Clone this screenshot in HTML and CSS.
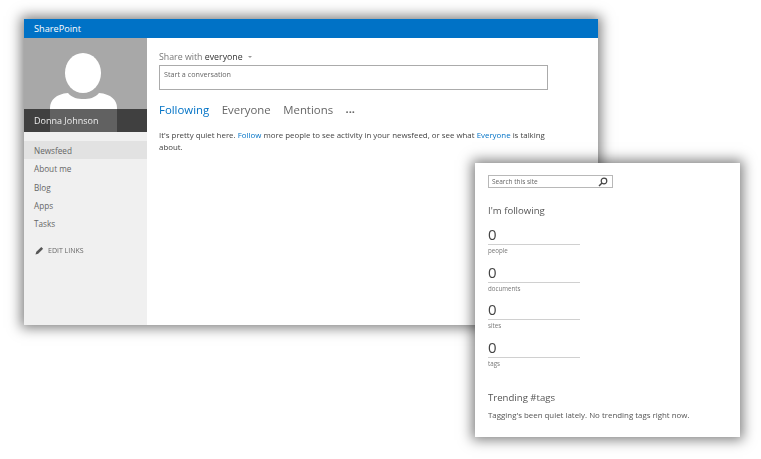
FILE: index.html
```html
<!DOCTYPE html>
<html>
<head>
    <title>SharePoint Newsfeed</title>
    <link rel="stylesheet" href="styles.css">
</head>
<body>
    <div class="window feed-window">
        <div class="topbar">SharePoint</div>
        <div class="feed-body">
            <div class="sidebar">
                <div class="photo">
                    <svg class="avatar" width="123" height="94" viewBox="0 0 123 94">
                        <path d="M26 94 V70 C26 62 32 56 44 55 C48 60 54 61 59.500 61 C65 61 71 60 75 55 C87 56 93 62 93 70 V94 Z" fill="#fff"/>
                        <ellipse cx="59" cy="35" rx="18" ry="20" fill="#fff"/>
                    </svg>
                    <div class="photo-name">Donna Johnson</div>
                </div>
                <ul class="nav">
                    <li class="nav-item active">Newsfeed</li>
                    <li class="nav-item">About me</li>
                    <li class="nav-item">Blog</li>
                    <li class="nav-item">Apps</li>
                    <li class="nav-item">Tasks</li>
                </ul>
                <div class="edit-links">
                    <svg width="9" height="9" viewBox="0 0 10 10">
                        <path d="M0.500 9.500 L1.500 6.500 L7 1 L9 3 L3.500 8.500 Z" fill="#555"/>
                    </svg>
                    EDIT LINKS
                </div>
            </div>
            <div class="main">
                <div class="share">Share with <span class="share-who">everyone</span> <span class="caret"></span></div>
                <div class="post-box">Start a conversation</div>
                <div class="tabs">
                    <span class="tab current">Following</span>
                    <span class="tab">Everyone</span>
                    <span class="tab">Mentions</span>
                    <span class="tab-more">...</span>
                </div>
                <p class="quiet">It's pretty quiet here. <span class="link">Follow</span> more people to see activity in your newsfeed, or see what <span class="link">Everyone</span> is talking about.</p>
            </div>
        </div>
    </div>

    <div class="window side-window">
        <div class="search">
            <span>Search this site</span>
            <svg width="10" height="10" viewBox="0 0 10 10">
                <circle cx="6" cy="4" r="2.800" fill="none" stroke="#444" stroke-width="1.200"/>
                <path d="M4 6 L1 9" stroke="#444" stroke-width="1.500"/>
            </svg>
        </div>
        <h2 class="side-title">I'm following</h2>
        <div class="stat"><div class="stat-num">0</div><div class="stat-label">people</div></div>
        <div class="stat"><div class="stat-num">0</div><div class="stat-label">documents</div></div>
        <div class="stat"><div class="stat-num">0</div><div class="stat-label">sites</div></div>
        <div class="stat"><div class="stat-num">0</div><div class="stat-label">tags</div></div>
        <h2 class="side-title trending">Trending #tags</h2>
        <p class="trending-text">Tagging's been quiet lately. No trending tags right now.</p>
    </div>
</body>
</html>
```

FILE: styles.css
```css
body { margin: 0; width: 761px; height: 459px; overflow: hidden; background: #fff; position: relative; font-family: "Open Sans", "Liberation Sans", sans-serif; color: #444; }
.window { position: absolute; background: #fff; box-shadow: 0 0 12px 3px rgba(0,0,0,.5); filter: blur(.3px); }

.feed-window { left: 24px; top: 19px; width: 574px; height: 306px; display: flex; flex-direction: column; }
.topbar { height: 19px; line-height: 20px; padding-left: 10px; background: #0072c6; color: #fff; font-size: 9.200px; }
.feed-body { flex: 1; display: flex; }

.sidebar { width: 123px; background: #f0f0f0; }
.photo { position: relative; height: 94px; background: #a8a8a8; }
.avatar { display: block; }
.photo-name { position: absolute; left: 0; right: 0; bottom: 0; height: 23px; line-height: 23px; padding-left: 10px; background: rgba(0,0,0,.62); color: #eee; font-size: 9px; }
.nav { list-style: none; margin: 9px 0 0; padding: 0; }
.nav-item { height: 18.250px; line-height: 20px; padding-left: 10px; font-size: 8.200px; color: #666; }
.active { background: #e2e2e2; }
.edit-links { display: flex; align-items: center; gap: 4px; margin: 9px 0 0 11px; height: 18px; font-size: 7px; color: #666; }

.main { flex: 1; padding: 12px 50px 0 12px; }
.share { height: 15px; line-height: 15px; font-size: 8.800px; color: #777; }
.share-who { color: #333; }
.caret { display: inline-block; margin: 0 0 2px 3px; border: 2px solid transparent; border-top-color: #999; border-bottom: 0; }
.post-box { height: 25px; box-sizing: border-box; padding: 2px 4px; border: 1px solid #ababab; font-size: 7.200px; line-height: 12px; color: #666; }
.tabs { display: flex; align-items: center; gap: 12.500px; height: 20px; margin-top: 9px; font-size: 11.400px; color: #666; }
.current { color: #0072c6; }
.tab-more { font-size: 11px; font-weight: bold; line-height: 12px; }
.quiet { margin: 10px 0 0; font-size: 7.900px; line-height: 12px; color: #444; }
.link { color: #0072c6; }

.side-window { left: 475px; top: 163px; width: 265px; height: 274px; box-sizing: border-box; padding: 12px 13px; }
.search { display: flex; align-items: center; justify-content: space-between; box-sizing: border-box; width: 125px; height: 13px; padding: 0 4px 0 3px; border: 1px solid #b8b8b8; font-size: 6.500px; color: #666; }
.side-title { margin: 15px 0 0; height: 15px; line-height: 15px; font-size: 9.600px; font-weight: normal; color: #555; }
.stat { width: 92px; height: 37.500px; }
.side-title + .stat { margin-top: 7px; }
.stat-num { height: 19px; line-height: 19px; border-bottom: 1px solid #d0d0d0; font-size: 15px; color: #444; }
.stat-label { margin-top: 1px; line-height: 10px; font-size: 6.200px; color: #777; }
.stat + .trending { margin-top: 15px; }
.trending-text { margin: 4px 0 0; font-size: 7.900px; line-height: 12px; color: #555; }
```
